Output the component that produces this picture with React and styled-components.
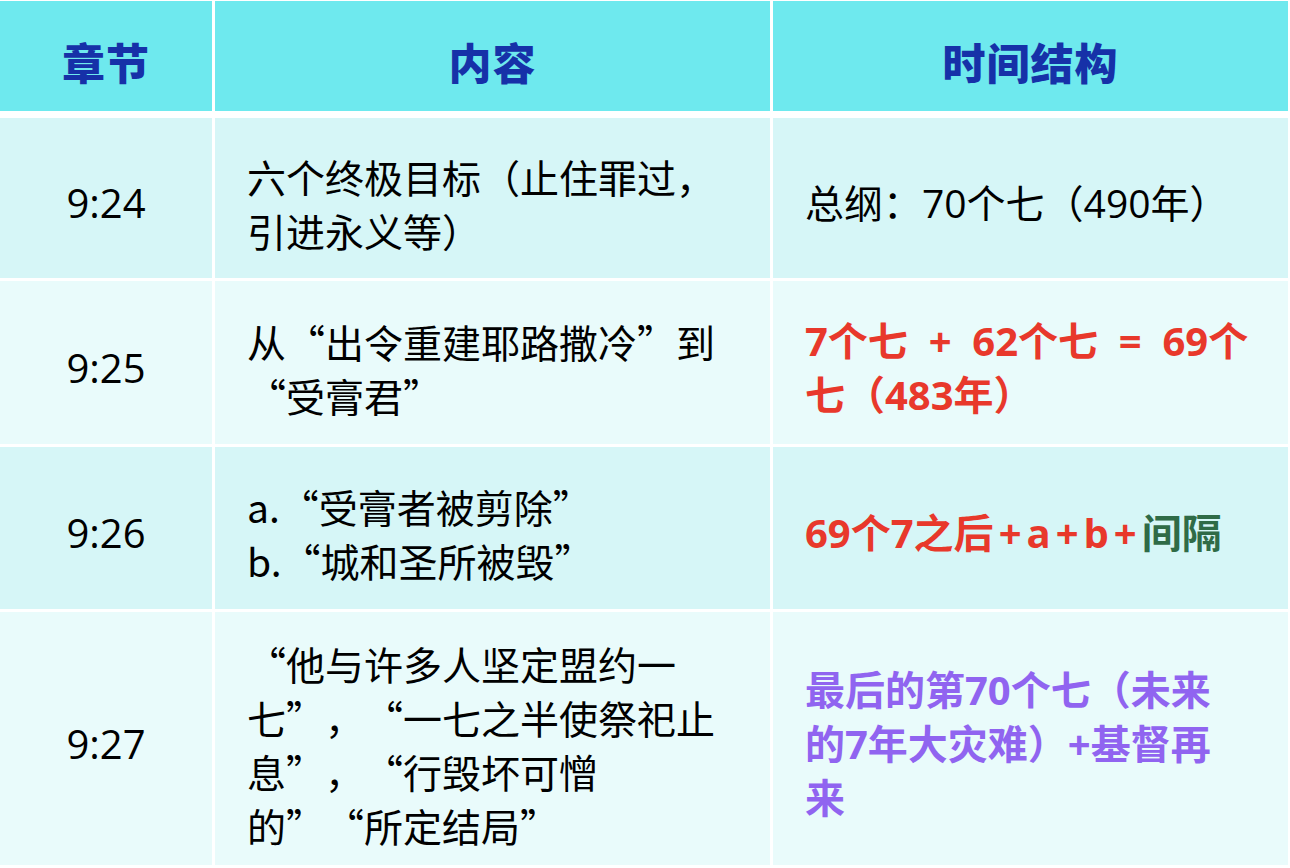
import React from 'react'
import styled, { createGlobalStyle } from 'styled-components'

const GlobalStyle = createGlobalStyle`
  html, body {
    margin: 0;
    padding: 0;
    background: #ffffff;
  }
  body {
    font-family: "Noto Sans CJK SC", "Noto Sans", sans-serif;
    text-spacing-trim: space-all;
  }
`

const Table = styled.div`
  width: 1290px;
  padding: 1px 2px 0 0;
  box-sizing: border-box;
  display: flex;
  flex-direction: column;
  gap: 3px;
`

const Row = styled.div`
  display: grid;
  grid-template-columns: 212px 555px 1fr;
  gap: 3px;
  height: ${p => p.h}px;
  margin-bottom: ${p => (p.head ? 4 : 0)}px;
`

const tones = {
  head: '#6ee9ee',
  dark: '#d6f6f7',
  light: '#e9fbfb',
}

const Cell = styled.div`
  background: ${p => tones[p.tone]};
  display: flex;
  align-items: center;
  justify-content: ${p => (p.center ? 'center' : 'flex-start')};
  padding: 10px ${p => (p.center ? 0 : 32)}px 0;
  box-sizing: border-box;
  font-size: 39px;
  line-height: 54px;
  color: #000;
  text-spacing-trim: space-all;
`

const HeadText = styled.span`
  font-size: 43px;
  font-weight: 900;
  color: #1631a8;
  letter-spacing: 1px;
`

const Verse = styled.span`
  font-size: 40px;
  font-family: "Open Sans", "Noto Sans CJK SC", sans-serif;
`

const Lines = styled.div`
  display: flex;
  flex-direction: column;
  font-family: ${p =>
    p.latin
      ? '"Open Sans", "Noto Sans CJK SC", sans-serif'
      : '"Noto Sans CJK SC", sans-serif'};
  font-size: ${p => (p.bold ? 40 : 39)}px;
  font-weight: ${p => (p.bold ? 700 : 400)};
  color: ${p => p.color || '#000'};
`

const Line = styled.span`
  white-space: pre;
`

const Green = styled.span`
  color: #2f6b47;
`

const Plus = styled.span`
  margin: 0 5px;
`

const rows = [
  {
    verse: '9:24',
    tone: 'dark',
    h: 160,
    content: ['六个终极目标（止住罪过，', '引进永义等）'],
    time: ['总纲：70个七（490年）'],
  },
  {
    verse: '9:25',
    tone: 'light',
    h: 163,
    content: ['从“出令重建耶路撒冷”到', '“受膏君”'],
    time: ['7个七  +  62个七  =  69个', '七（483年）'],
    color: '#e8382b',
    bold: true,
  },
  {
    verse: '9:26',
    tone: 'dark',
    h: 162,
    content: ['a.“受膏者被剪除”', 'b.“城和圣所被毁”'],
    time: [
      <>
        69个7之后<Plus>+</Plus>a<Plus>+</Plus>b<Plus>+</Plus>
        <Green>间隔</Green>
      </>,
    ],
    color: '#e8382b',
    bold: true,
  },
  {
    verse: '9:27',
    tone: 'light',
    h: 253,
    content: [
      '“他与许多人坚定盟约一',
      '七”，“一七之半使祭祀止',
      '息”，“行毁坏可憎',
      '的”“所定结局”',
    ],
    time: ['最后的第70个七（未来', '的7年大灾难）+基督再', '来'],
    color: '#9064f0',
    bold: true,
  },
]

const App = () => {
  return (
    <>
      <GlobalStyle />
      <Table>
        <Row h={110} head>
          <Cell tone="head" center>
            <HeadText>章节</HeadText>
          </Cell>
          <Cell tone="head" center>
            <HeadText>内容</HeadText>
          </Cell>
          <Cell tone="head" center>
            <HeadText>时间结构</HeadText>
          </Cell>
        </Row>

        {rows.map(r => (
          <Row key={r.verse} h={r.h}>
            <Cell tone={r.tone} center>
              <Verse>{r.verse}</Verse>
            </Cell>
            <Cell tone={r.tone}>
              <Lines>
                {r.content.map((t, i) => (
                  <Line key={i}>{t}</Line>
                ))}
              </Lines>
            </Cell>
            <Cell tone={r.tone}>
              <Lines latin bold={r.bold} color={r.color}>
                {r.time.map((t, i) => (
                  <Line key={i}>{t}</Line>
                ))}
              </Lines>
            </Cell>
          </Row>
        ))}
      </Table>
    </>
  )
}

export default App
